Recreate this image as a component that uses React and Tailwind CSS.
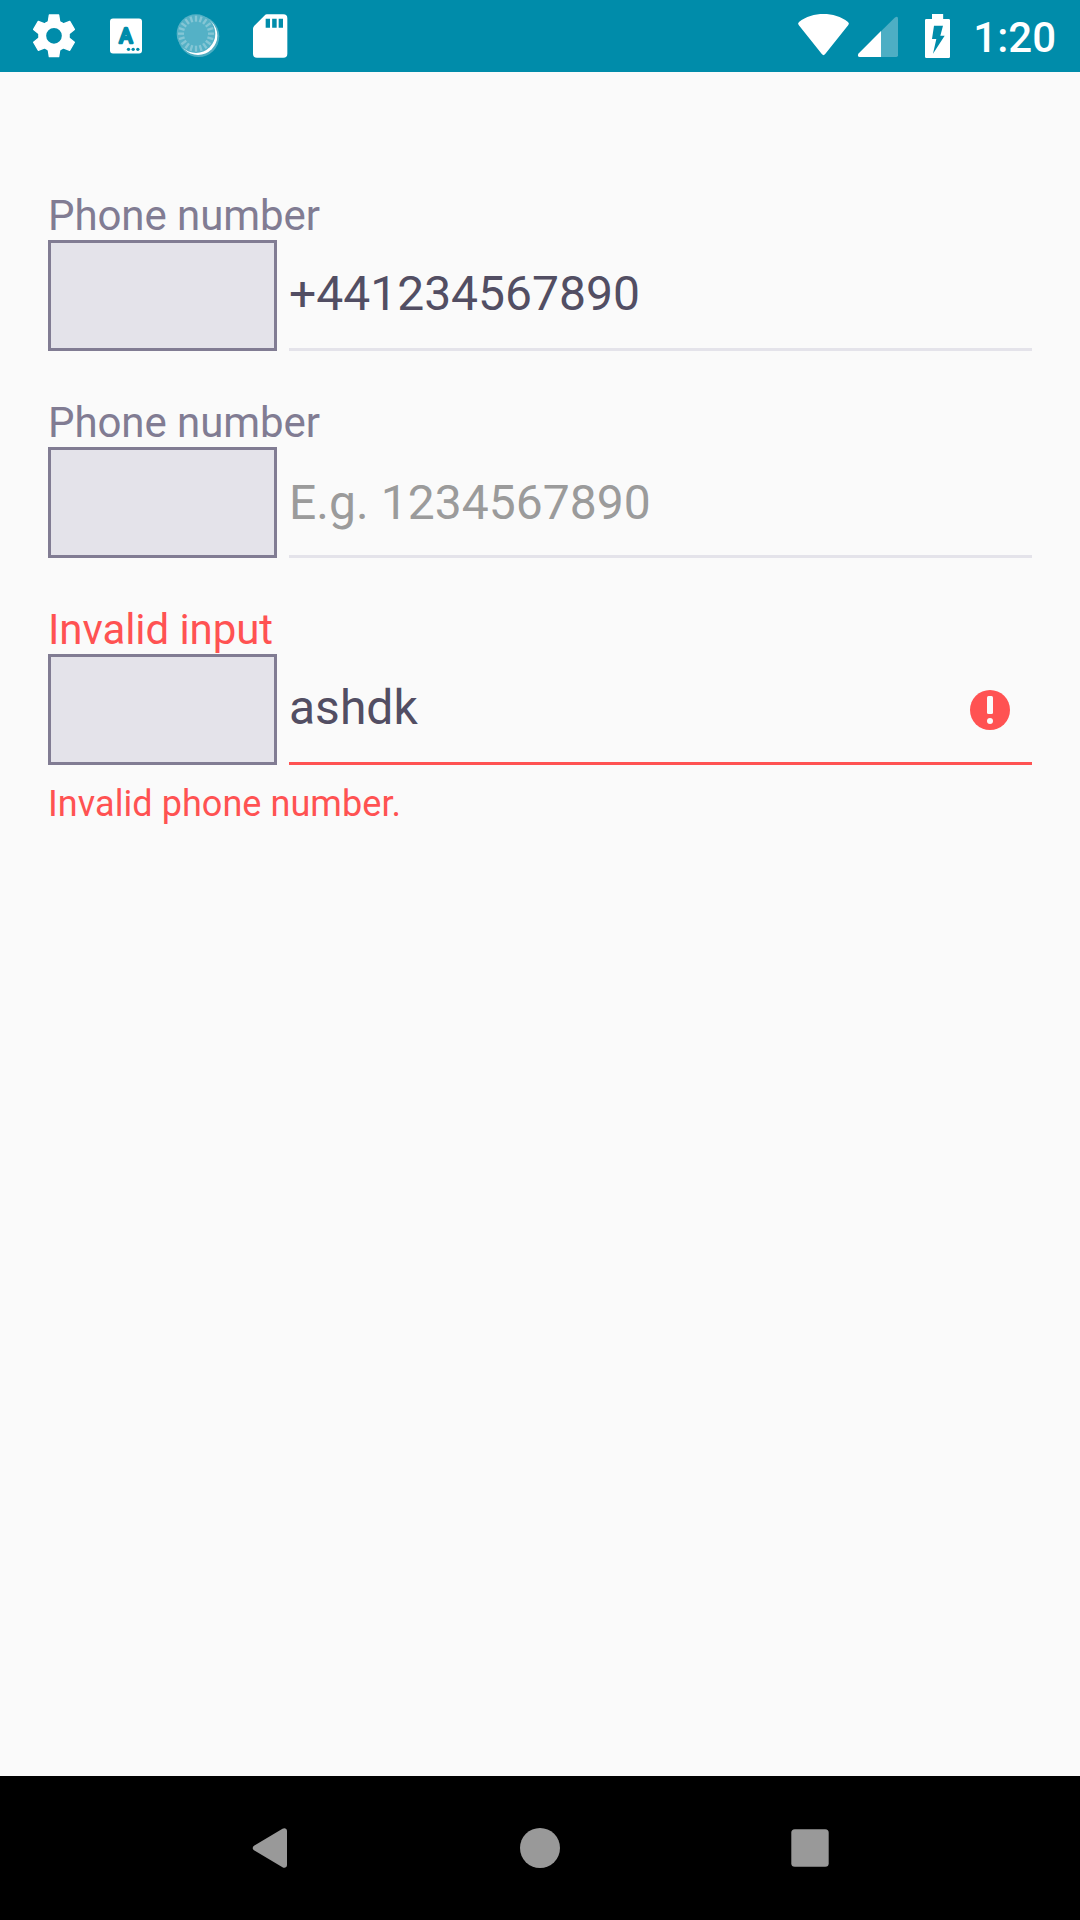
import React from "react";

const TEETH = [0, 60, 120, 180, 240, 300];
const TICKS = Array.from({ length: 20 }, (_, i) => i * 18);

function GearIcon() {
  return (
    <svg className="h-[72px] w-12" viewBox="90 0 144 216">
      <g transform="translate(162 107.5)" fill="#fff" stroke="#fff">
        <circle r="35.5" fill="none" strokeWidth="24" />
        {TEETH.map((a) => (
          <path
            key={a}
            d="M-17.5 -40L-14 -62.5H14L17.5 -40Z"
            strokeWidth="4"
            strokeLinejoin="round"
            transform={`rotate(${a})`}
          />
        ))}
      </g>
    </svg>
  );
}

function KeyboardIcon() {
  return (
    <svg className="ml-[27px] h-[72px] w-[42px]" viewBox="315 0 126 216">
      <rect x="330" y="55.500" width="96" height="105" rx="9" fill="#fff" />
      <text
        x="378"
        y="128.500"
        textAnchor="middle"
        className="font-['Roboto'] text-[61px] font-normal"
        fill="#008caa"
        stroke="#008caa"
        strokeWidth="8"
        strokeLinejoin="round"
      >
        A
      </text>
      <g fill="#008caa">
        <circle cx="385.500" cy="148" r="5" />
        <circle cx="399.500" cy="148" r="5" />
        <circle cx="413.500" cy="148" r="5" />
      </g>
    </svg>
  );
}

function DialIcon() {
  return (
    <svg className="ml-[27px] h-[72px] w-12" viewBox="42 0 144 216">
      <circle cx="116" cy="109" r="62" fill="#fff" opacity="0.3" />
      <circle cx="114" cy="107" r="58" fill="#fff" />
      <circle cx="108" cy="101" r="58" fill="#54b1c6" />
      <g transform="translate(108 101)" stroke="#84c6d5" strokeWidth="7">
        {TICKS.map((a) => (
          <path key={a} d="M0 -36V-54" transform={`rotate(${a})`} />
        ))}
      </g>
    </svg>
  );
}

function SdCardIcon() {
  return (
    <svg className="ml-[27px] h-[72px] w-[42px]" viewBox="267 0 126 216">
      <path
        fill="#fff"
        fillRule="evenodd"
        d="M321 43H370Q382 43 382 55V161Q382 173 370 173H291Q279 173 279 161V86Q279 81 283 77L313 47Q317 43 321 43ZM317 56V83H330V56ZM336.500 56V83H350V56ZM356 56V83H369V56Z"
      />
    </svg>
  );
}

function WifiIcon() {
  return (
    <svg className="h-[72px] w-[57px]" viewBox="45 0 171 216">
      <path
        fill="#fff"
        d="M56 75Q52 70 57 66C98 34 163 34 204 66Q209 70 205 75L135 163Q130.500 168 126 163Z"
      />
    </svg>
  );
}

function SignalIcon() {
  return (
    <svg className="ml-[3px] h-[72px] w-[45px]" viewBox="225 0 135 216">
      <path fill="#4daec4" d="M303 94L344 53Q354 46 354 56V166Q354 171 349 171H303Z" />
      <path fill="#fff" d="M303 93V171H239Q231 169 235 161Z" />
    </svg>
  );
}

function BatteryIcon() {
  return (
    <svg className="ml-5 h-[72px] w-[35px]" viewBox="60 0 105 216">
      <path
        fill="#fff"
        fillRule="evenodd"
        d="M96 42H129.500V57H146Q150 57 150 61V170Q150 174 146 174H79Q75 174 75 170V61Q75 57 79 57H96ZM102 77L96 117H109L99 161L134 107H121L129 77Z"
      />
    </svg>
  );
}

function StatusBar() {
  return (
    <header className="flex h-[72px] items-center justify-between bg-[#008caa] pl-[30px] pr-6 text-white">
      <div className="flex">
        <GearIcon />
        <KeyboardIcon />
        <DialIcon />
        <SdCardIcon />
      </div>
      <div className="flex items-center">
        <WifiIcon />
        <SignalIcon />
        <BatteryIcon />
        <span className="ml-[18px] mt-[3px] text-[42px] font-medium leading-[48px]">1:20</span>
      </div>
    </header>
  );
}

function ErrorIcon() {
  return (
    <svg className="mt-[3px] size-10" viewBox="0 0 40 40">
      <circle cx="20" cy="20" r="20" fill="#ff5252" />
      <rect x="17" y="6" width="6" height="18" rx="1.500" fill="#fafafa" />
      <circle cx="20" cy="31" r="3" fill="#fafafa" />
    </svg>
  );
}

function PhoneField({ label, value, placeholder, error }) {
  return (
    <section>
      <div
        className={`h-12 text-[42px] leading-[48px] tracking-[-0.07px] ${error ? "text-[#ff5252]" : "text-[#817c93]"}`}
      >
        {label}
      </div>
      <div className="flex h-[111px] gap-3">
        <div className="w-[229px] border-[3px] border-[#817c93] bg-[#e4e3ea]" />
        <div
          className={`flex flex-1 items-center justify-between border-b-[3px] pr-[22px] text-[48px] leading-[56px] ${
            error ? "border-[#ff5252]" : "border-[#e4e3ea]"
          }`}
        >
          {value ? (
            <span className="mb-[1px] text-[#524e63]">{value}</span>
          ) : (
            <span className="mt-[3px] tracking-[0.04px] text-[#9b9b9b]">{placeholder}</span>
          )}
          {error && <ErrorIcon />}
        </div>
      </div>
      {error && (
        <p className="mt-[18px] text-[36px] leading-[42px] tracking-[0.06px] text-[#ff5252]">{error}</p>
      )}
    </section>
  );
}

function NavBar() {
  return (
    <nav className="grid h-36 grid-cols-3 items-center justify-items-center bg-black px-[135px]">
      <svg className="size-12" viewBox="0 0 48 48">
        <path
          fill="#999"
          d="M36.500 4.800C38.500 3.600 41 4.500 41 7V41C41 43.500 38.500 44.400 36.500 43.200L8 26.300C6.300 25.200 6.300 22.900 8 21.800Z"
        />
      </svg>
      <div className="size-10 rounded-full bg-[#999]" />
      <svg className="size-10" viewBox="0 0 40 40">
        <rect x="1.300" y="1.300" width="37.400" height="37.400" rx="3.500" fill="#999" />
      </svg>
    </nav>
  );
}

export default function App() {
  return (
    <div className="flex h-[1920px] w-[1080px] flex-col bg-[#fafafa] font-['Roboto',sans-serif]">
      <StatusBar />
      <main className="flex flex-1 flex-col gap-12 px-12 pt-[120px]">
        <PhoneField label="Phone number" value="+441234567890" />
        <PhoneField label="Phone number" placeholder="E.g. 1234567890" />
        <PhoneField label="Invalid input" value="ashdk" error="Invalid phone number." />
      </main>
      <NavBar />
    </div>
  );
}
